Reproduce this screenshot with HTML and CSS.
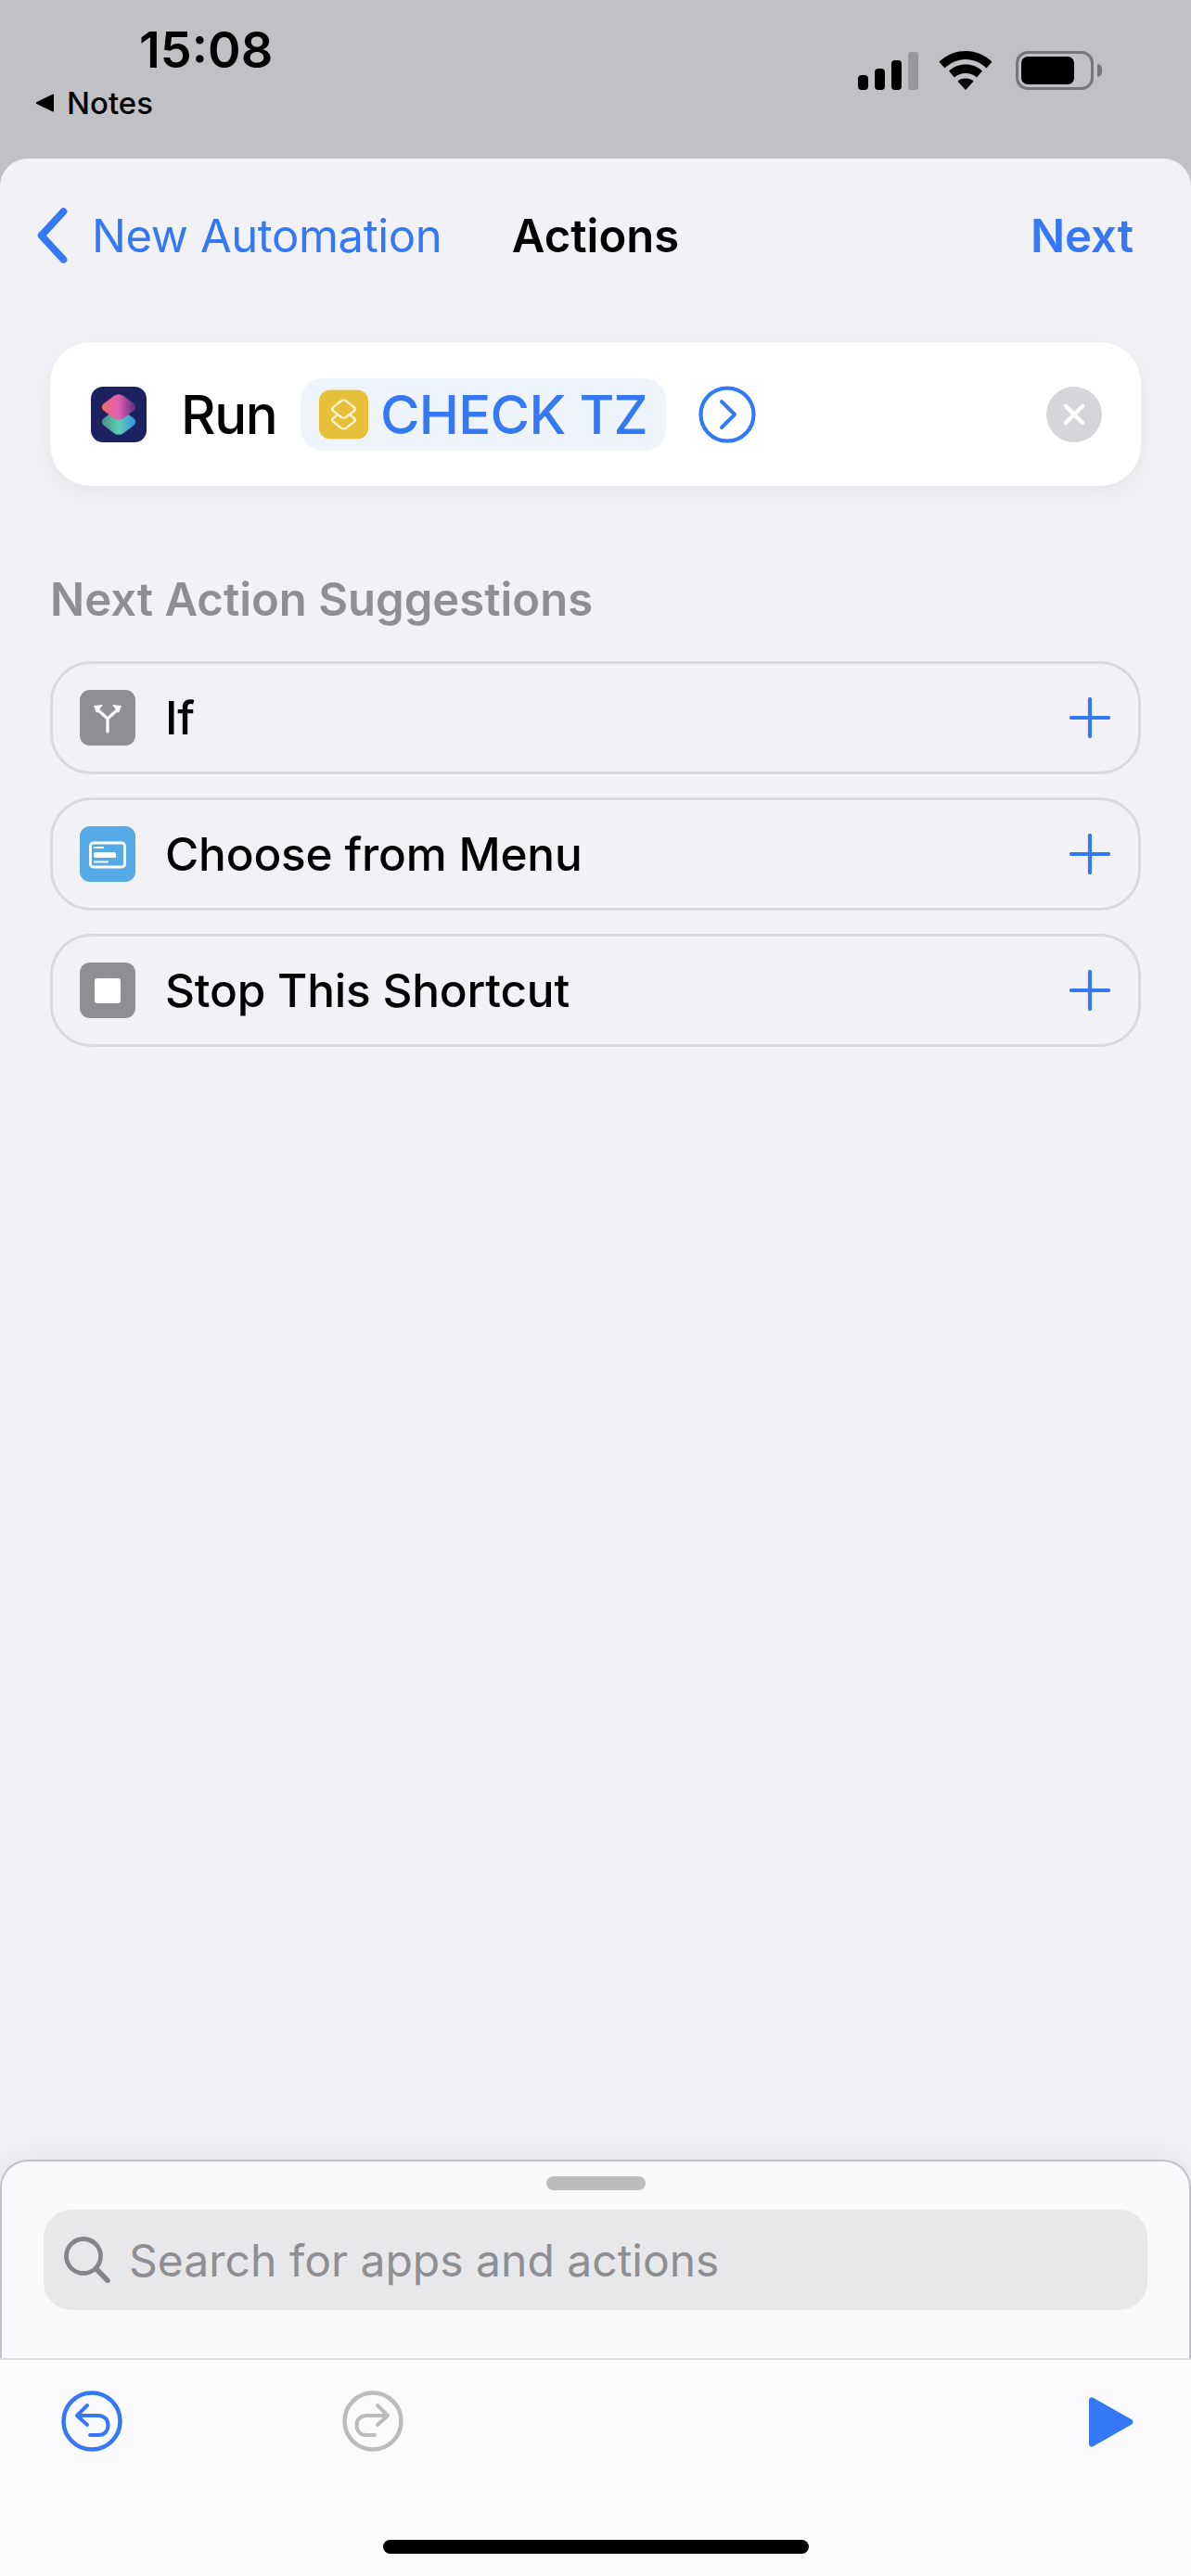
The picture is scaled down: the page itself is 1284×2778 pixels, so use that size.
FILE: index.html
```html
<!DOCTYPE html>
<html lang="en">
<head>
    <meta charset="UTF-8">
    <meta name="viewport" content="width=device-width, initial-scale=1.0">
    <title>Actions</title>
    <link rel="stylesheet" href="styles.css">
</head>
<body>

    <div class="status-bar">
        <div class="status-left">
            <div class="time">15:08</div>
            <div class="back-app">
                <svg class="back-tri" viewBox="0 0 21 20"><path d="M20 1.5v17a1 1 0 0 1-1.5.8L1.5 11a1.2 1.2 0 0 1 0-2L18.500.7A1 1 0 0 1 20 1.500z" fill="#000"/></svg>
                <span>Notes</span>
            </div>
        </div>
        <div class="status-right">
            <div class="signal">
                <span class="bar bar1"></span>
                <span class="bar bar2"></span>
                <span class="bar bar3"></span>
                <span class="bar bar4"></span>
            </div>
            <svg class="wifi" viewBox="0 0 58 42">
                <path d="M29 0C18 0 8.500 4.200 0.500 11.500l6 7C13 12.500 20.500 9 29 9s16 3.500 22.500 9.500l6-7C49.500 4.200 40 0 29 0z" fill="#000"/>
                <path d="M29 14.500c-7 0-13 2.500-18 7l6 7c3-2.800 7.300-4.500 12-4.500s9 1.700 12 4.500l6-7c-5-4.500-11-7-18-7z" fill="#000"/>
                <path d="M29 29.500c-3.500 0-6.500 1.200-8.500 3.200L29 42l8.500-9.300c-2-2-5-3.200-8.500-3.200z" fill="#000"/>
            </svg>
            <div class="battery">
                <div class="battery-body"><div class="battery-fill"></div></div>
                <div class="battery-cap"></div>
            </div>
        </div>
    </div>

    <div class="sheet">
        <div class="nav">
            <div class="nav-left">
                <svg class="chevron" viewBox="0 0 34 58"><path d="M29 4L6 29l23 25" fill="none" stroke="#3478f6" stroke-width="7.500" stroke-linecap="round" stroke-linejoin="round"/></svg>
                <span class="nav-back">New Automation</span>
            </div>
            <div class="nav-title">Actions</div>
            <div class="nav-next">Next</div>
        </div>

        <div class="run-card">
            <svg class="run-icon" viewBox="0 0 60 60">
                <defs>
                    <linearGradient id="topGrad" x1="0" y1="1" x2="1" y2="0">
                        <stop offset="0" stop-color="#f26b5b"/>
                        <stop offset="0.5" stop-color="#e05fb5"/>
                        <stop offset="1" stop-color="#3c2a6a"/>
                    </linearGradient>
                    <linearGradient id="botGrad" x1="0" y1="1" x2="1" y2="0">
                        <stop offset="0" stop-color="#4a7f88"/>
                        <stop offset="0.5" stop-color="#5bcfb0"/>
                        <stop offset="1" stop-color="#2f86f0"/>
                    </linearGradient>
                </defs>
                <rect width="60" height="60" rx="13" fill="#1c2160"/>
                <rect x="-15" y="-15" width="30" height="30" rx="7" transform="translate(30 38) scale(1 .75) rotate(45)" fill="url(#botGrad)"/>
                <rect x="-15" y="-15" width="30" height="30" rx="7" transform="translate(30 22) scale(1 .75) rotate(45)" fill="url(#topGrad)"/>
            </svg>
            <span class="run-label">Run</span>
            <div class="chip">
                <svg class="chip-icon" viewBox="0 0 54 54">
                    <rect width="54" height="54" rx="12" fill="#e7c039"/>
                    <rect x="-10" y="-10" width="20" height="20" rx="4" transform="translate(27 33) scale(1 .78) rotate(45)" fill="none" stroke="#fdf3cf" stroke-width="2.800"/>
                    <rect x="-10" y="-10" width="20" height="20" rx="4" transform="translate(27 21) scale(1 .78) rotate(45)" fill="#e7c039" stroke="#fdf3cf" stroke-width="2.800"/>
                </svg>
                <span class="chip-text">CHECK TZ</span>
            </div>
            <svg class="open-icon" viewBox="0 0 62 62">
                <circle cx="31" cy="31" r="28.500" fill="none" stroke="#3478f6" stroke-width="4.200"/>
                <path d="M25 17l14 14-14 14" fill="none" stroke="#3478f6" stroke-width="4" stroke-linecap="round" stroke-linejoin="round"/>
            </svg>
            <svg class="clear-icon" viewBox="0 0 60 60">
                <circle cx="30" cy="30" r="30" fill="#d6d6da"/>
                <path d="M21 21l18 18M39 21L21 39" stroke="#fff" stroke-width="4.500" stroke-linecap="round"/>
            </svg>
        </div>

        <div class="section-title">Next Action Suggestions</div>

        <div class="suggestions">
            <div class="suggestion">
                <svg class="action-icon" viewBox="0 0 60 60">
                    <rect width="60" height="60" rx="11" fill="#8e8e93"/>
                    <path d="M30 45V31L20 22M30 31l10-9" fill="none" stroke="#fff" stroke-width="3.200" stroke-linecap="round"/>
                    <path d="M15 17l10-1-7 9zM45 17l-10-1 7 9z" fill="#fff"/>
                </svg>
                <span class="suggestion-name">If</span>
                <svg class="plus" viewBox="0 0 44 44"><path d="M22 2v40M2 22h40" stroke="#3478f6" stroke-width="4.200" stroke-linecap="round"/></svg>
            </div>
            <div class="suggestion">
                <svg class="action-icon" viewBox="0 0 60 60">
                    <rect width="60" height="60" rx="11" fill="#55a9e4"/>
                    <rect x="11.500" y="18" width="37" height="26" rx="3" fill="none" stroke="#fff" stroke-width="2.800"/>
                    <path d="M16 23h9M16 38.500h14" stroke="#fff" stroke-width="2.200" stroke-linecap="round"/>
                    <rect x="15" y="28" width="24" height="6" rx="1.500" fill="#fff"/>
                </svg>
                <span class="suggestion-name">Choose from Menu</span>
                <svg class="plus" viewBox="0 0 44 44"><path d="M22 2v40M2 22h40" stroke="#3478f6" stroke-width="4.200" stroke-linecap="round"/></svg>
            </div>
            <div class="suggestion">
                <svg class="action-icon" viewBox="0 0 60 60">
                    <rect width="60" height="60" rx="11" fill="#8e8e93"/>
                    <rect x="16" y="17" width="28" height="27" rx="3" fill="#fff"/>
                </svg>
                <span class="suggestion-name">Stop This Shortcut</span>
                <svg class="plus" viewBox="0 0 44 44"><path d="M22 2v40M2 22h40" stroke="#3478f6" stroke-width="4.200" stroke-linecap="round"/></svg>
            </div>
        </div>

        <div class="drawer">
            <div class="handle"></div>
            <div class="search">
                <svg class="search-icon" viewBox="0 0 50 50">
                    <circle cx="21" cy="21" r="18.500" fill="none" stroke="#858589" stroke-width="4.800"/>
                    <path d="M34.500 34.500L47 47.500" stroke="#858589" stroke-width="5.500" stroke-linecap="round"/>
                </svg>
                <span>Search for apps and actions</span>
            </div>
        </div>

        <div class="toolbar">
            <div class="history">
                <svg class="history-icon" viewBox="0 0 66 66">
                    <circle cx="33" cy="33" r="30.500" fill="none" stroke="#3478f6" stroke-width="4.500"/>
                    <path d="M28 16L17 27l11 10M18 27h22c7 0 10.500 5 10.500 10.500S47 48 40 48h-9" fill="none" stroke="#3478f6" stroke-width="4" stroke-linecap="round" stroke-linejoin="round"/>
                </svg>
                <svg class="history-icon" viewBox="0 0 66 66">
                    <circle cx="33" cy="33" r="30.500" fill="none" stroke="#bcbcbe" stroke-width="4.500"/>
                    <path d="M38 16l11 11-11 10M48 27H26c-7 0-10.500 5-10.500 10.500S19 48 26 48h9" fill="none" stroke="#bcbcbe" stroke-width="4" stroke-linecap="round" stroke-linejoin="round"/>
                </svg>
            </div>
            <svg class="play" viewBox="0 0 48 54"><path d="M0 3.500A3 3 0 0 1 4.500.8l41.500 23.500a3 3 0 0 1 0 5.200L4.500 53.200A3 3 0 0 1 0 50.500z" fill="#3478f6"/></svg>
        </div>
        <div class="home-row"><div class="home-bar"></div></div>
    </div>

</body>
</html>
```

FILE: styles.css
```css
* {
    box-sizing: border-box;
}

body {
    margin: 0;
    width: 1284px;
    height: 2778px;
    overflow: hidden;
    font-family: Inter, "Liberation Sans", sans-serif;
    background-color: #c1c0c5;
    display: flex;
    flex-direction: column;
    color: #000;
}

/* status bar */
.status-bar {
    height: 171px;
    flex-shrink: 0;
    display: flex;
    justify-content: space-between;
    align-items: flex-start;
    padding: 0 96px 0 38px;
}

.status-left {
    padding-top: 23px;
}

.time {
    font-size: 54px;
    font-weight: 600;
    line-height: 62px;
    margin-left: 112px;
}

.back-app {
    display: flex;
    align-items: center;
    gap: 13px;
    font-size: 33px;
    font-weight: 500;
    line-height: 40px;
    margin-top: 6px;
}

.back-tri {
    width: 21px;
    height: 20px;
}

.status-right {
    display: flex;
    align-items: flex-end;
    padding-top: 55px;
}

.signal {
    display: flex;
    align-items: flex-end;
    gap: 7px;
    height: 41px;
}

.bar {
    width: 11px;
    border-radius: 4px;
    background-color: #000;
}

.bar1 { height: 16px; }
.bar2 { height: 23px; }
.bar3 { height: 32px; }
.bar4 { height: 41px; background-color: #98989b; border-radius: 3px; }

.wifi {
    width: 58px;
    height: 42px;
    margin-left: 22px;
}

.battery {
    display: flex;
    align-items: center;
    margin-left: 25px;
    gap: 4px;
}

.battery-body {
    width: 84px;
    height: 42px;
    border: 3px solid #77777b;
    border-radius: 13px;
    padding: 3px;
}

.battery-fill {
    width: 57px;
    height: 100%;
    background-color: #000;
    border-radius: 7px;
}

.battery-cap {
    width: 5px;
    height: 14px;
    background-color: #77777b;
    border-radius: 0 5px 5px 0;
}

/* main sheet */
.sheet {
    flex: 1;
    min-height: 0;
    background-color: #f1f1f6;
    border-radius: 30px 30px 0 0;
    display: flex;
    flex-direction: column;
}

.nav {
    height: 198px;
    flex-shrink: 0;
    display: flex;
    align-items: center;
    padding: 0 62px 32px;
    font-size: 49px;
}

.nav-left {
    flex: 1 1 0;
    display: flex;
    align-items: center;
    gap: 25px;
    color: #3478f6;
    letter-spacing: -0.4px;
    white-space: nowrap;
}

.chevron {
    width: 36px;
    height: 60px;
    margin-left: -24px;
}

.nav-title {
    font-weight: 600;
}

.nav-next {
    flex: 1 1 0;
    text-align: right;
    color: #3478f6;
    font-weight: 600;
}

/* run action */
.run-card {
    margin: 0 54px;
    height: 155px;
    flex-shrink: 0;
    background-color: #fff;
    border-radius: 44px;
    box-shadow: 0 8px 24px rgba(0, 0, 0, 0.05);
    display: flex;
    align-items: center;
    padding: 0 42px 0 44px;
}

.run-icon {
    width: 60px;
    height: 60px;
}

.run-label {
    font-size: 58px;
    font-weight: 500;
    letter-spacing: -1.3px;
    margin-left: 37px;
    width: 100px;
}

.chip {
    display: flex;
    align-items: center;
    height: 78px;
    margin-left: 29px;
    padding: 0 20px;
    width: 394px;
    border-radius: 24px;
    background-color: #eff4fb;
    gap: 13px;
}

.chip-icon {
    width: 54px;
    height: 54px;
}

.chip-text {
    font-size: 58px;
    font-weight: 450;
    letter-spacing: -0.7px;
    color: #3478f6;
    white-space: nowrap;
}

.open-icon {
    width: 62px;
    height: 62px;
    margin-left: 35px;
}

.clear-icon {
    width: 60px;
    height: 60px;
    margin-left: auto;
}

.section-title {
    margin: 94px 54px 37px;
    flex-shrink: 0;
    font-size: 49px;
    line-height: 58px;
    font-weight: 600;
    color: #8e8e93;
}

.suggestions {
    flex: 1;
    display: flex;
    flex-direction: column;
    gap: 25px;
    padding: 0 54px;
}

.suggestion {
    height: 122px;
    border: 3px solid #d8d8dd;
    border-radius: 44px;
    display: flex;
    align-items: center;
    padding: 0 30px 0 29px;
}

.action-icon {
    width: 60px;
    height: 60px;
}

.suggestion-name {
    font-size: 49.500px;
    font-weight: 550;
    letter-spacing: -0.2px;
    margin-left: 32px;
}

.plus {
    width: 44px;
    height: 44px;
    margin-left: auto;
}

/* search drawer */
.drawer {
    height: 214px;
    flex-shrink: 0;
    background-color: #f9f9fb;
    border: 2px solid #c2c2c6;
    border-bottom: none;
    border-radius: 30px 30px 0 0;
    box-shadow: 0 -8px 24px rgba(0, 0, 0, 0.05);
    padding: 16px 45px 0;
    display: flex;
    flex-direction: column;
    align-items: center;
}

.handle {
    width: 107px;
    height: 15px;
    background-color: #bcbcbe;
    border-radius: 8px;
}

.search {
    align-self: stretch;
    height: 108px;
    margin-top: 21px;
    background-color: #e8e8ea;
    border-radius: 30px;
    display: flex;
    align-items: center;
    padding: 0 22px;
    font-size: 48px;
    color: #8e8e93;
    gap: 20px;
}

.search-icon {
    width: 50px;
    height: 50px;
}

.toolbar {
    height: 115px;
    flex-shrink: 0;
    background-color: #fbfbfd;
    border-top: 2px solid #dcdcdf;
    display: flex;
    align-items: flex-start;
    justify-content: space-between;
    padding: 33px 62px 0 66px;
}

.history {
    display: flex;
    gap: 237px;
}

.history-icon {
    width: 66px;
    height: 66px;
}

.play {
    width: 48px;
    height: 54px;
    margin-top: 7px;
}

.home-row {
    height: 120px;
    flex-shrink: 0;
    background-color: #fbfbfd;
    display: flex;
    justify-content: center;
}

.home-bar {
    width: 459px;
    height: 15px;
    margin-top: 81px;
    background-color: #000;
    border-radius: 8px;
}
```
